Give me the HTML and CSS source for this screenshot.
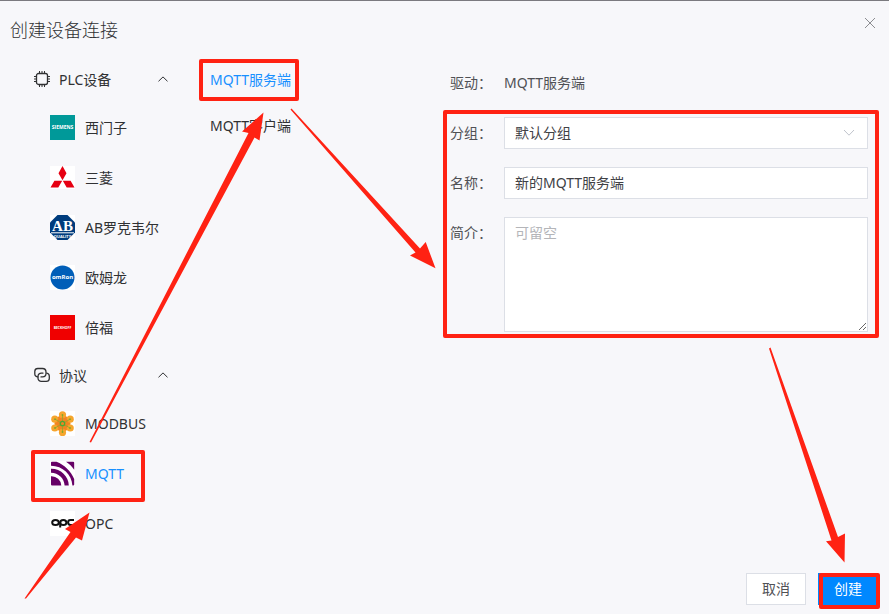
FILE: index.html
```
<!DOCTYPE html>
<html lang="zh-CN">
    <head>
        <meta charset="utf-8">
        <title>创建设备连接</title>
        <link rel="stylesheet" href="styles.css">
    </head>
    <body>
        <div class="dialog">
            <div class="header">
                <h1 class="title">创建设备连接</h1>
                <button class="close" type="button" aria-label="关闭">
                    <svg width="12" height="12" viewBox="0 0 12 12"><path d="M1 1L11 11M11 1L1 11" stroke="#8c8d91" fill="none"/></svg>
                </button>
            </div>

            <div class="content">
                <!-- driver groups -->
                <div class="groups">
                    <button class="groupHead" type="button">
                        <svg width="16" height="16" viewBox="0 0 16 16" fill="none" stroke="#303133">
                            <rect x="2.5" y="2.5" width="11" height="11" rx="2" stroke-width="1.3"/>
                            <path d="M5.5 0V2.5M8 0V2.5M10.5 0V2.5M5.5 13.5V16M8 13.5V16M10.5 13.5V16M0 5.5H2.5M0 8H2.5M0 10.5H2.5M13.5 5.5H16M13.5 8H16M13.5 10.5H16"/>
                        </svg>
                        <span class="groupName">PLC设备</span>
                        <svg width="10" height="6" viewBox="0 0 10 6"><path d="M.5 5.3L5 .9L9.5 5.3" stroke="#303133" fill="none"/></svg>
                    </button>
                    <a class="item" href="#">
                        <svg width="25" height="25" viewBox="0 0 25 25">
                            <rect width="25" height="25" fill="#009999"/>
                            <text class="logoText" x="12.5" y="14.2" font-size="5" fill="#fff" text-anchor="middle">SIEMENS</text>
                        </svg>
                        西门子
                    </a>
                    <a class="item" href="#">
                        <svg width="25" height="25" viewBox="0 0 25 25">
                            <rect y="1" width="25" height="23" fill="#fff"/>
                            <path fill="#e60012" d="M12.5 1L16.5 8.3L12.5 15.2L8.5 8.3ZM12.2 15.8L8.3 22.5H.5L4.4 15.8ZM12.8 15.8L16.7 22.5H24.5L20.6 15.8Z"/>
                        </svg>
                        三菱
                    </a>
                    <a class="item" href="#">
                        <svg width="25" height="25" viewBox="0 0 25 25">
                            <rect width="25" height="25" fill="#fff"/>
                            <path fill="#003c7d" d="M7.5 0H17.5L25 7.5V17.5L17.5 25H7.5L0 17.5V7.5Z"/>
                            <text class="logoSerif" x="12.5" y="15.5" font-size="15" fill="#fff" text-anchor="middle">AB</text>
                            <path d="M1 17.8H24" stroke="#fff"/>
                            <text class="logoText" x="12.5" y="22.8" font-size="4" fill="#fff" text-anchor="middle">QUALITY</text>
                        </svg>
                        AB罗克韦尔
                    </a>
                    <a class="item" href="#">
                        <svg width="25" height="25" viewBox="0 0 25 25">
                            <rect width="25" height="25" fill="#fff"/>
                            <circle cx="12.5" cy="12.5" r="12" fill="#005eb8"/>
                            <text class="logoText" x="12.5" y="14.4" font-size="6" fill="#fff" text-anchor="middle">omRon</text>
                        </svg>
                        欧姆龙
                    </a>
                    <a class="item" href="#">
                        <svg width="25" height="25" viewBox="0 0 25 25">
                            <rect width="25" height="25" fill="#f00000"/>
                            <text class="logoText" x="12.5" y="13.8" font-size="3.4" fill="#fff" text-anchor="middle">BECKHOFF</text>
                        </svg>
                        倍福
                    </a>

                    <button class="groupHead" type="button">
                        <svg width="16" height="16" viewBox="0 0 16 16" fill="none" stroke="#303133" stroke-width="1.3" stroke-linecap="round">
                            <path d="M3.8 9.9A3 3 0 0 1 .8 6.9V4.2A3 3 0 0 1 3.8 1.5H8.5A3.6 3.6 0 0 1 12 5V6.6A3.4 3.4 0 0 1 8.7 9.9H7"/>
                            <path d="M12.8 6.1A3 3 0 0 1 15.3 9V11.4A3 3 0 0 1 12.3 14.3H7.3A3.2 3.2 0 0 1 4 11.2V9.4A3.3 3.3 0 0 1 7.3 6.1H9"/>
                        </svg>
                        <span class="groupName">协议</span>
                        <svg width="10" height="6" viewBox="0 0 10 6"><path d="M.5 5.3L5 .9L9.5 5.3" stroke="#303133" fill="none"/></svg>
                    </button>
                    <a class="item" href="#">
                        <svg width="25" height="25" viewBox="0 0 25 25">
                            <rect width="25" height="25" fill="#fff"/>
                            <circle cx="12.5" cy="12.5" r="8" fill="#f28322"/>
                            <g fill="#f6a52d">
                                <circle cx="12.5" cy="3.8" r="3.6"/><circle cx="20.2" cy="8.2" r="3.6"/><circle cx="20.2" cy="17" r="3.6"/>
                                <circle cx="12.5" cy="21.4" r="3.6"/><circle cx="4.8" cy="17" r="3.6"/><circle cx="4.8" cy="8.2" r="3.6"/>
                            </g>
                            <circle cx="12.5" cy="12.5" r="6" fill="#f28322"/>
                            <path d="M12.5 4V21M5 8.2L20 17M20 8.2L5 17" stroke="#8fa82b" stroke-width=".8"/>
                            <circle cx="12.5" cy="12.5" r="2.2" fill="#f28322" stroke="#4da735" stroke-width="1.3"/>
                            <g fill="#7ea82b">
                                <circle cx="12.5" cy="4" r=".9"/><circle cx="20" cy="8.2" r=".9"/><circle cx="20" cy="17" r=".9"/>
                                <circle cx="12.5" cy="21" r=".9"/><circle cx="5" cy="17" r=".9"/><circle cx="5" cy="8.2" r=".9"/>
                            </g>
                        </svg>
                        MODBUS
                    </a>
                    <a class="item active" href="#">
                        <svg width="25" height="25" viewBox="0 0 25 25">
                            <rect width="25" height="25" fill="#fff"/>
                            <path fill="#660066" d="M1 15.2A9.7 9.7 0 0 1 11.3 24.5H2A1 1 0 0 1 1 23.5ZM1 7.8C10.5 7.6 18.7 15.2 18.8 24.5H14.6C14.3 17.5 8.4 11.8 1 11.8ZM1 2A1 1 0 0 1 2 .8H6.5C14.5 4 21 10.3 24.2 18V23.5A1 1 0 0 1 23.2 24.5H22.4C21.8 13.5 12.7 4.9 1 4.8ZM16 .8H23.2A1 1 0 0 1 24.2 1.8V8.8C22 5.5 19.3 2.8 16 .8Z"/>
                        </svg>
                        MQTT
                    </a>
                    <a class="item" href="#">
                        <svg width="25" height="25" viewBox="0 0 25 25">
                            <rect width="25" height="25" fill="#fff"/>
                            <g fill="none" stroke="#111" stroke-width="2">
                                <ellipse cx="5.5" cy="11.5" rx="3.3" ry="2.6"/>
                                <ellipse cx="13.3" cy="11.5" rx="3.1" ry="2.6"/>
                                <path d="M10.2 11V16.5M24 9.1H20.5A2.4 2.4 0 0 0 20.5 13.9H24"/>
                            </g>
                        </svg>
                        OPC
                    </a>
                </div>

                <div class="drivers">
                    <a class="driver active" href="#">MQTT服务端</a>
                    <a class="driver" href="#">MQTT客户端</a>
                </div>

                <form class="form" id="linkForm">
                    <div class="row">
                        <span class="label">驱动：</span>
                        <span class="value">MQTT服务端</span>
                    </div>
                    <div class="row">
                        <label class="label" for="group">分组：</label>
                        <div class="selectWrap">
                            <select class="field" id="group"><option>默认分组</option></select>
                            <svg class="arrow" width="12" height="8" viewBox="0 0 12 8"><path d="M1 1L6 6.2L11 1" stroke="#c0c4cc" fill="none"/></svg>
                        </div>
                    </div>
                    <div class="row">
                        <label class="label" for="name">名称：</label>
                        <input class="field" id="name" type="text" value="新的MQTT服务端">
                    </div>
                    <div class="row">
                        <label class="label" for="intro">简介：</label>
                        <textarea class="field intro" id="intro" placeholder="可留空"></textarea>
                    </div>
                </form>
            </div>

            <div class="footer">
                <button class="btn" type="button">取消</button>
                <button class="btn primary" type="submit" form="linkForm">创建</button>
            </div>

            <!-- step marks -->
            <svg class="marks" width="889" height="614" viewBox="0 0 889 614">
                <g fill="none" stroke="#ff2213" stroke-width="4" stroke-linejoin="round">
                    <rect x="33" y="452" width="110" height="48"/>
                    <rect x="201" y="61" width="96" height="38"/>
                    <rect x="445" y="112" width="432" height="224"/>
                    <rect x="821" y="575" width="57" height="32"/>
                </g>
                <g fill="#ff2213">
                    <path d="M24.5 598.5L70.5 532L65 529L89.5 512.5L82 540.5L76 537.5L26 598.5Z"/>
                    <path d="M89.5 442L248.5 133L242 131.5L263.5 112.5L259.5 140.5L254.5 137.5L91 442.5Z"/>
                    <path d="M291.5 108.5L420 248.5L425.7 242L435.5 268.3L410 255.5L415.5 252.5L290.5 109.5Z"/>
                    <path d="M770.5 347.5L838 537L845 533.5L844.5 562.5L826 541.3L831.5 540.5L769 348.5Z"/>
                </g>
            </svg>
        </div>
    </body>
</html>
```
FILE: styles.css
```
body,html{
    margin:0px;
    padding:0px;
}
body,button,input,select,textarea{
    font-family:"Noto Sans","Noto Sans CJK SC",sans-serif;
    font-size:14px;
    font-weight:400;
}
*{
    box-sizing:border-box;
}
.dialog{
    position:relative;
    display:flex;
    flex-direction:column;
    min-height:100vh;
    overflow:hidden;
    background:#f7f7fa;
    border-top:1px solid #7b7a7f;
    color:#303133;
}
.header{
    display:flex;
    justify-content:space-between;
    align-items:flex-start;
    padding:12px 10px 0px;
    height:55px;
}
.title{
    margin:0px;
    font-size:18px;
    line-height:34px;
    font-weight:300;
}
.close{
    display:flex;
    border:none;
    background:none;
    padding:4px 3px;
    cursor:pointer;
}
.content{
    flex:1;
    display:grid;
    grid-template-columns:200px 240px 1fr;
}
.groupHead{
    display:flex;
    align-items:center;
    gap:9px;
    width:100%;
    height:46px;
    padding:0px 32px 0px 34px;
    border:none;
    background:none;
    color:#303133;
    text-align:left;
    cursor:pointer;
}
.groupName{
    flex:1;
}
.item{
    display:flex;
    align-items:center;
    gap:10px;
    height:50px;
    padding-left:50px;
    color:#303133;
    text-decoration:none;
}
.logoText{
    font-family:"Open Sans",sans-serif;
    font-weight:bold;
}
.logoSerif{
    font-family:"Liberation Serif",serif;
    font-weight:bold;
}
.drivers{
    padding-top:1px;
}
.driver{
    display:block;
    padding-left:10px;
    line-height:46px;
    color:#303133;
    text-decoration:none;
}
.active{
    color:#1890ff;
}
.form{
    padding:11px 21px 0px 10px;
}
.row{
    display:flex;
    margin-bottom:18px;
    line-height:32px;
}
.label{
    width:54px;
    color:#505155;
}
.value{
    color:#505155;
}
.selectWrap{
    position:relative;
    flex:1;
    display:flex;
}
.field{
    flex:1;
    min-width:0px;
    height:32px;
    padding:0px 10px 2px;
    border:1px solid #dcdfe6;
    border-radius:0px;
    background:white;
    color:#404145;
    outline:none;
    appearance:none;
}
.arrow{
    position:absolute;
    right:13px;
    top:12px;
    pointer-events:none;
}
.intro{
    height:115px;
    padding:4px 10px;
    line-height:21px;
    resize:vertical;
}
.field::placeholder{
    color:#b4b5b9;
}
.footer{
    display:flex;
    justify-content:flex-end;
    gap:12px;
    padding:0px 11px 9px;
}
.btn{
    width:60px;
    height:32px;
    padding:0px 0px 2px;
    border:1px solid #dcdfe6;
    background:white;
    color:#505155;
    cursor:pointer;
}
.primary{
    background:#0088ff;
    border-color:#0088ff;
    color:white;
}
.marks{
    position:absolute;
    left:0px;
    top:-1px;
    pointer-events:none;
}
```
